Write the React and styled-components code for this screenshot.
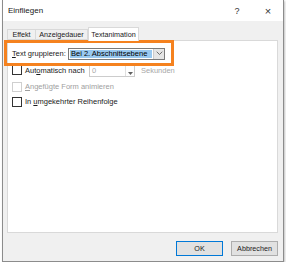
import React from 'react';
import styled, { createGlobalStyle } from 'styled-components';

const GlobalStyle = createGlobalStyle`
  html, body {
    margin: 0;
    background: #ffffff;
  }
  body {
    font-family: "Liberation Sans", Arial, sans-serif;
    font-size: 7.5px;
    color: #1a1a1a;
  }
`;

const Dialog = styled.div`
  box-sizing: border-box;
  width: 282px;
  height: 262px;
  margin-left: 2px;
  border: 1px solid #8c8c8c;
  border-top: none;
  box-shadow: 1px 1px 2px rgba(0, 0, 0, 0.25);
  display: flex;
  flex-direction: column;
  background: #f0f0f0;
`;

const TitleBar = styled.div`
  height: 21px;
  background: #ffffff;
  display: flex;
  align-items: center;
  padding-left: 5px;
  font-size: 8px;
  color: #202020;
`;

const Title = styled.span`
  flex: 1;
`;

const TitleButton = styled.span`
  width: ${({ wide }) => (wide ? 30 : 32)}px;
  text-align: center;
  font-size: ${({ big }) => (big ? 11 : 9)}px;
  color: #333;
`;

const Body = styled.div`
  flex: 1;
  display: flex;
  flex-direction: column;
  padding: 6px 5px 0 4px;
`;

const TabRow = styled.div`
  display: flex;
  align-items: flex-end;
  height: 13px;
`;

const Tab = styled.div`
  box-sizing: border-box;
  width: ${({ w }) => w}px;
  height: ${({ active }) => (active ? 14 : 11)}px;
  margin-bottom: ${({ active }) => (active ? -1 : 0)}px;
  background: ${({ active }) => (active ? '#ffffff' : '#f0f0f0')};
  border: 1px solid #d9d9d9;
  border-bottom: ${({ active }) => (active ? 'none' : '1px solid #d9d9d9')};
  border-left: ${({ first, active }) => (first || active ? '1px solid #d9d9d9' : 'none')};
  display: flex;
  align-items: center;
  justify-content: center;
  font-size: 7.2px;
  position: relative;
  z-index: ${({ active }) => (active ? 1 : 0)};
`;

const Panel = styled.div`
  position: relative;
  box-sizing: border-box;
  height: 193px;
  background: #ffffff;
  border: 1px solid #d9d9d9;
  display: flex;
  flex-direction: column;
  gap: 4px;
  padding: 7px 0 0 4px;
`;

const Highlight = styled.div`
  position: absolute;
  left: -4px;
  top: -1px;
  width: 170px;
  height: 26px;
  box-sizing: border-box;
  border: 3px solid #f5821f;
  pointer-events: none;
`;

const Row = styled.div`
  display: flex;
  align-items: center;
  height: ${({ h }) => h || 11}px;
  color: ${({ disabled }) => (disabled ? '#a0a0a0' : '#1a1a1a')};
`;

const Label = styled.span`
  width: 56px;
`;

const Select = styled.div`
  box-sizing: border-box;
  width: 97px;
  height: 12px;
  border: 1px solid #7a7a7a;
  display: flex;
  align-items: stretch;
  background: #ffffff;
`;

const SelectValue = styled.div`
  width: 81px;
  margin: 1px;
  background: #99c9f0;
  display: flex;
  align-items: center;
  padding-left: 1px;
  color: #000;
`;

const SelectButton = styled.div`
  flex: 1;
  display: flex;
  align-items: center;
  justify-content: center;
  background: #e5e5e5;
  border-left: 1px solid #cccccc;
`;

const Check = styled.span`
  box-sizing: border-box;
  width: 10px;
  height: 10px;
  border: 1px solid ${({ disabled }) => (disabled ? '#cfcfcf' : '#333333')};
  background: #ffffff;
  margin-right: 3px;
`;

const CheckText = styled.span`
  width: ${({ w }) => w || 'auto'};
`;

const Spin = styled.div`
  box-sizing: border-box;
  width: 46px;
  height: 14px;
  border: 1px solid #cccccc;
  display: flex;
  color: #a8a8a8;
  margin-left: 4px;
`;

const SpinValue = styled.div`
  flex: 1;
  padding-left: 2px;
  display: flex;
  align-items: center;
`;

const SpinButtons = styled.div`
  width: 8px;
  display: flex;
  flex-direction: column;
  justify-content: flex-end;
  align-items: center;
  border-left: 1px solid #e0e0e0;
  padding-bottom: 1px;
`;

const Unit = styled.span`
  margin-left: 6px;
  color: #a8a8a8;
`;

const U = styled.span`
  text-decoration: underline;
`;

const Footer = styled.div`
  display: flex;
  justify-content: flex-end;
  gap: 8px;
  margin-top: 8px;
  padding-right: 0;
`;

const Button = styled.div`
  box-sizing: border-box;
  width: 47px;
  height: 15px;
  background: #e1e1e1;
  border: 1px solid ${({ primary }) => (primary ? '#0078d7' : '#adadad')};
  display: flex;
  align-items: center;
  justify-content: center;
  font-size: 7.2px;
`;

const Chevron = ({ size = 7, color = '#555' }) => (
  <svg width={size} height={size * 0.6} viewBox="0 0 10 6">
    <path d="M1 1 L5 5 L9 1" fill="none" stroke={color} strokeWidth="1.2" />
  </svg>
);

const SmallArrow = () => (
  <svg width="5" height="3" viewBox="0 0 5 3">
    <path d="M0 0 H5 L2.5 3 Z" fill="#606060" />
  </svg>
);

export default function App() {
  return (
    <>
      <GlobalStyle />
      <Dialog>
        <TitleBar>
          <Title>Einfliegen</Title>
          <TitleButton>?</TitleButton>
          <TitleButton big wide>×</TitleButton>
        </TitleBar>
        <Body>
          <TabRow>
            <Tab first w={29}>Effekt</Tab>
            <Tab w={52}>Anzeigedauer</Tab>
            <Tab active w={51}>Textanimation</Tab>
          </TabRow>
          <Panel>
            <Row>
              <Label><U>T</U>ext gruppieren:</Label>
              <Select>
                <SelectValue>Bei 2. Abschnittsebene</SelectValue>
                <SelectButton><Chevron /></SelectButton>
              </Select>
            </Row>
            <Row h={14}>
              <Check />
              <CheckText w="60px">Aut<U>o</U>matisch nach</CheckText>
              <Spin>
                <SpinValue>0</SpinValue>
                <SpinButtons><SmallArrow /></SpinButtons>
              </Spin>
              <Unit>Sekunden</Unit>
            </Row>
            <Row disabled>
              <Check disabled />
              <CheckText><U>A</U>ngefügte Form animieren</CheckText>
            </Row>
            <Row>
              <Check />
              <CheckText>In <U>u</U>mgekehrter Reihenfolge</CheckText>
            </Row>
            <Highlight />
          </Panel>
          <Footer>
            <Button primary>OK</Button>
            <Button>Abbrechen</Button>
          </Footer>
        </Body>
      </Dialog>
    </>
  );
}
